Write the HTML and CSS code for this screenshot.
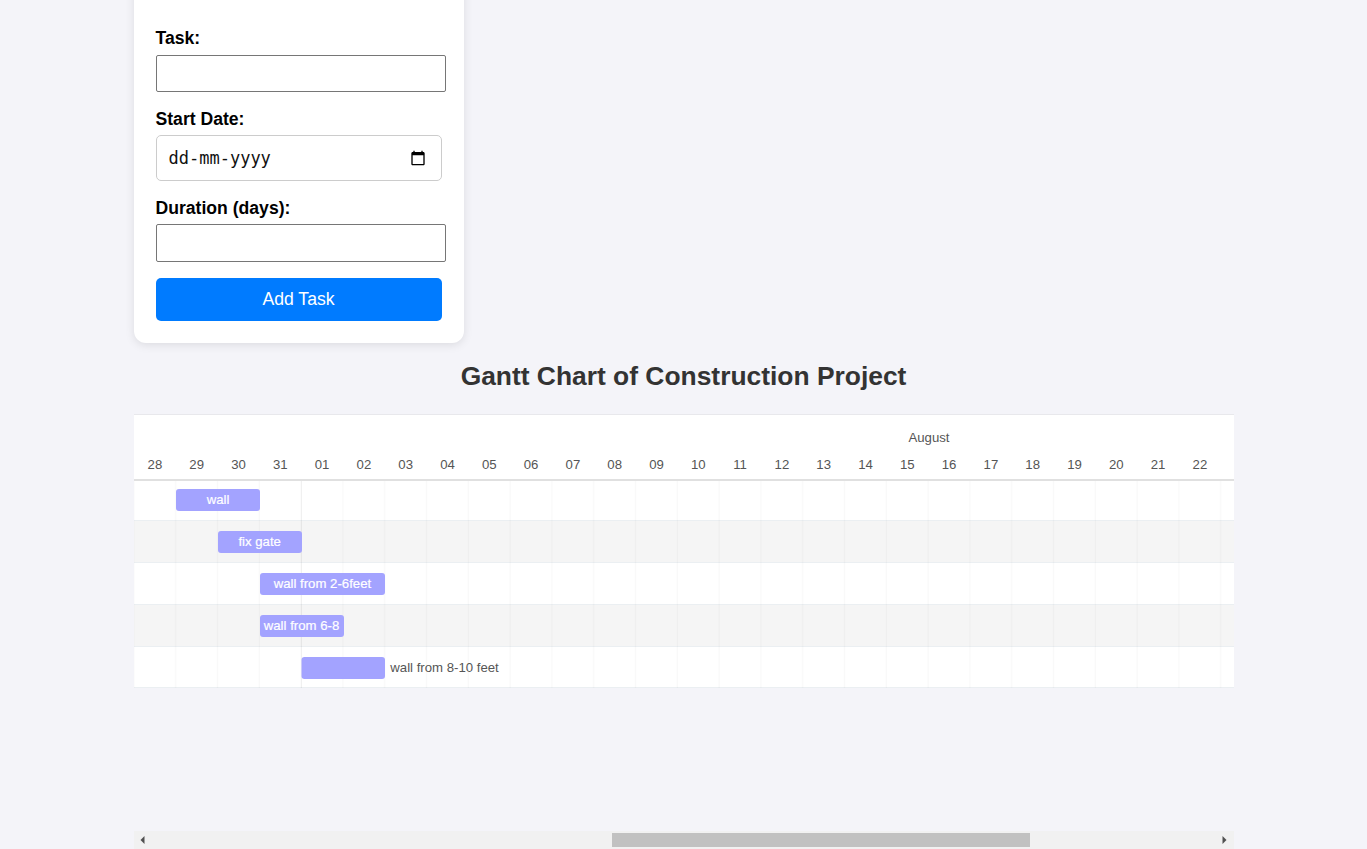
FILE: index.html
```html
<!DOCTYPE html>
<html lang="en-GB">
<head>
    <meta charset="UTF-8">
    <title>Gantt Chart of Construction Project</title>
    <link rel="stylesheet" href="styles.css">
</head>
<body>

<div class="container">
    <form class="task-form">
        <label for="task">Task:</label>
        <input class="text-input task-input" id="task" type="text">
        <label>Start Date:</label>
        <div class="date-input">
            <span>dd-mm-yyyy</span>
            <svg class="date-icon" width="16" height="16" viewBox="0 0 24 24">
                <path d="M20 3h-1V1h-2v2H7V1H5v2H4c-1.100 0-2 .9-2 2v16c0 1.100.9 2 2 2h16c1.100 0 2-.9 2-2V5c0-1.100-.9-2-2-2zm0 18H4V8h16v13z"></path>
            </svg>
        </div>
        <label for="duration">Duration (days):</label>
        <input class="text-input duration-input" id="duration" type="number">
        <button type="button" class="add-btn">Add Task</button>
    </form>

    <h2 class="chart-title">Gantt Chart of Construction Project</h2>

    <div class="gantt-wrap">
        <svg class="gantt" width="1100" height="274" viewBox="0 0 1100 274">
            <defs>
                <pattern id="ticks" x="0.5" y="0" width="41.8" height="274" patternUnits="userSpaceOnUse">
                    <rect class="tick" x="40.8" y="0" width="1" height="274"></rect>
                </pattern>
            </defs>

            <!-- rows -->
            <rect class="row" x="0" y="64" width="1100" height="42"></rect>
            <rect class="row-alt" x="0" y="106" width="1100" height="42"></rect>
            <rect class="row" x="0" y="148" width="1100" height="42"></rect>
            <rect class="row-alt" x="0" y="190" width="1100" height="42"></rect>
            <rect class="row" x="0" y="232" width="1100" height="42"></rect>
            <line class="row-line" x1="0" x2="1100" y1="106.5" y2="106.5"></line>
            <line class="row-line" x1="0" x2="1100" y1="148.5" y2="148.5"></line>
            <line class="row-line" x1="0" x2="1100" y1="190.5" y2="190.5"></line>
            <line class="row-line" x1="0" x2="1100" y1="232.5" y2="232.5"></line>
            <line class="row-line" x1="0" x2="1100" y1="273.5" y2="273.5"></line>

            <!-- column ticks -->
            <rect fill="url(#ticks)" x="0" y="66" width="1100" height="208"></rect>
            <line class="tick-thick" x1="167.5" x2="167.5" y1="66" y2="274"></line>

            <!-- header -->
            <rect class="header" x="0" y="0" width="1100" height="65"></rect>
            <line class="header-top" x1="0" x2="1100" y1="0.5" y2="0.5"></line>
            <line class="header-line" x1="0" x2="1100" y1="66" y2="66"></line>
            <text class="upper-text" x="795" y="28">August</text>
            <text class="lower-text" x="20.9" y="55">28</text>
            <text class="lower-text" x="62.7" y="55">29</text>
            <text class="lower-text" x="104.5" y="55">30</text>
            <text class="lower-text" x="146.3" y="55">31</text>
            <text class="lower-text" x="188.1" y="55">01</text>
            <text class="lower-text" x="229.9" y="55">02</text>
            <text class="lower-text" x="271.7" y="55">03</text>
            <text class="lower-text" x="313.5" y="55">04</text>
            <text class="lower-text" x="355.3" y="55">05</text>
            <text class="lower-text" x="397.1" y="55">06</text>
            <text class="lower-text" x="438.9" y="55">07</text>
            <text class="lower-text" x="480.7" y="55">08</text>
            <text class="lower-text" x="522.5" y="55">09</text>
            <text class="lower-text" x="564.3" y="55">10</text>
            <text class="lower-text" x="606.1" y="55">11</text>
            <text class="lower-text" x="647.9" y="55">12</text>
            <text class="lower-text" x="689.7" y="55">13</text>
            <text class="lower-text" x="731.5" y="55">14</text>
            <text class="lower-text" x="773.3" y="55">15</text>
            <text class="lower-text" x="815.1" y="55">16</text>
            <text class="lower-text" x="856.9" y="55">17</text>
            <text class="lower-text" x="898.7" y="55">18</text>
            <text class="lower-text" x="940.5" y="55">19</text>
            <text class="lower-text" x="982.3" y="55">20</text>
            <text class="lower-text" x="1024.1" y="55">21</text>
            <text class="lower-text" x="1065.9" y="55">22</text>

            <!-- bars -->
            <rect class="bar" x="42" y="75" width="84" height="22" rx="3" ry="3"></rect>
            <text class="bar-label" x="84" y="90">wall</text>
            <rect class="bar" x="84" y="117" width="84" height="22" rx="3" ry="3"></rect>
            <text class="bar-label" x="125.7" y="132">fix gate</text>
            <rect class="bar" x="126" y="159" width="125" height="22" rx="3" ry="3"></rect>
            <text class="bar-label" x="188.4" y="174">wall from 2-6feet</text>
            <rect class="bar" x="126" y="201" width="84" height="22" rx="3" ry="3"></rect>
            <text class="bar-label" x="167.5" y="216">wall from 6-8</text>
            <rect class="bar" x="167.5" y="243" width="83.5" height="22" rx="3" ry="3"></rect>
            <text class="bar-label-out" x="256.3" y="258">wall from 8-10 feet</text>
        </svg>

        <div class="scrollbar">
            <span class="arrow arrow-left"></span>
            <div class="scroll-track"><div class="scroll-thumb"></div></div>
            <span class="arrow arrow-right"></span>
        </div>
    </div>
</div>

</body>
</html>
```

FILE: styles.css
```css
* { box-sizing: border-box; }
html, body { height: 100%; }
body {
    margin: 0;
    overflow: hidden;
    background: #f4f4f9;
    color: #333;
    font-family: "Liberation Sans", Arial, sans-serif;
}
.container {
    width: 1100px;
    margin: -20px auto 0;
}

/* form card */
.task-form {
    display: flex;
    flex-direction: column;
    align-items: flex-start;
    width: 330px;
    padding: 48px 22px 22px;
    background: #fff;
    border-radius: 12px;
    box-shadow: 0 2px 10px rgba(0, 0, 0, 0.1);
}
.task-form label {
    margin-bottom: 6px;
    color: #000;
    font-size: 17.6px;
    font-weight: bold;
    line-height: 20px;
}
.task-form label:first-child { margin-bottom: 7px; }
.text-input {
    width: 290px;
    margin-bottom: 17px;
    background: #fff;
    border: 1px solid #767676;
    border-radius: 2px;
}
.task-input { height: 37px; }
.duration-input { height: 38px; margin-bottom: 16px; }
.date-input {
    display: flex;
    align-items: center;
    justify-content: space-between;
    width: 286px;
    height: 46px;
    margin-bottom: 17px;
    padding: 0 15px 0 12px;
    background: #fff;
    border: 1px solid #ccc;
    border-radius: 5px;
    color: #111;
    font-family: "DejaVu Sans Mono", monospace;
    font-size: 17px;
}
.date-icon { display: block; }
.add-btn {
    width: 286px;
    height: 43px;
    background: #007bff;
    border: none;
    border-radius: 5px;
    color: #fff;
    font-family: "Liberation Sans", Arial, sans-serif;
    font-size: 17.6px;
}

.chart-title {
    margin: 18px 0 23px;
    color: #333;
    font-size: 26.4px;
    line-height: 30px;
    text-align: center;
}

/* gantt */
.gantt-wrap {
    display: flex;
    flex-direction: column;
    justify-content: space-between;
    height: 435px;
}
.gantt { display: block; }
.row { fill: #fff; }
.row-alt { fill: #f5f5f5; }
.row-line { stroke: #ebeff2; stroke-width: 1; }
.tick { fill: rgba(0, 0, 0, 0.028); }
.tick-thick { stroke: rgba(0, 0, 0, 0.04); stroke-width: 1; }
.header { fill: #fff; }
.header-top { stroke: #e8e8ec; stroke-width: 1; }
.header-line { stroke: #e0e0e0; stroke-width: 2; }
.upper-text, .lower-text, .bar-label, .bar-label-out {
    font-family: "Liberation Sans", Arial, sans-serif;
    font-size: 13.2px;
}
.upper-text, .lower-text { fill: #555; text-anchor: middle; }
.bar { fill: #a3a3ff; }
.bar-label { fill: #fff; stroke: #fff; stroke-width: 0.2px; text-anchor: middle; }
.bar-label-out { fill: #555; }

.scrollbar {
    display: flex;
    align-items: center;
    flex: 0 0 18px;
    background: #f1f1f1;
}
.arrow {
    flex: 0 0 18px;
    width: 0;
    height: 8px;
}
.arrow-left { background: #505050; clip-path: polygon(7px 4px, 11px 0, 11px 8px); }
.arrow-right { background: #505050; clip-path: polygon(7px 0, 11px 4px, 7px 8px); }
.scroll-track {
    flex: 1;
    height: 14px;
}
.scroll-thumb {
    width: 418px;
    height: 14px;
    margin-left: 460px;
    background: #c1c1c1;
}
```
